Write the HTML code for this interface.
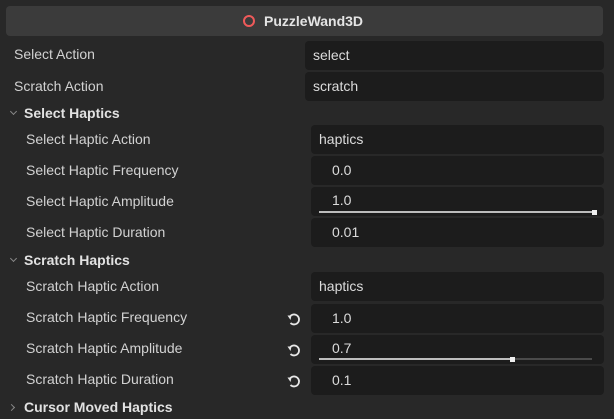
<!DOCTYPE html><html><head><style>
body{margin:0;width:614px;height:419px;background:#282828;font-family:"Liberation Sans",sans-serif;font-size:14px;color:#d2d2d2;position:relative;overflow:hidden}
.a{position:absolute}
.f{position:absolute;background:#1c1c1c;border-radius:4px;height:29px;line-height:29px;box-sizing:border-box;color:#dcdcdc}
.l{position:absolute;line-height:20px}
.h{position:absolute;font-weight:bold;line-height:20px;color:#e2e2e2}
.c{position:absolute;width:4px;height:4px;border-right:1.2px solid #888;border-bottom:1.2px solid #888}
.tr{position:absolute;height:2px;background:#4a4a4a}
.tf{position:absolute;height:2px;background:#bdbdbd}
.k{position:absolute;width:5px;height:5px;background:#eee}
</style></head><body>
<div class="a" style="left:6px;top:6px;width:597px;height:30px;background:#3b3b3b;border-radius:4px"></div>
<div class="a" style="left:243px;top:15px;width:8px;height:8px;border:2px solid #ef5a5a;border-radius:50%"></div>
<div class="a" style="left:264px;top:11px;line-height:20px;font-weight:bold;color:#e4e4e4">PuzzleWand3D</div>

<div class="l" style="left:14px;top:44px">Select Action</div>
<div class="f" style="left:305px;top:41px;width:299px;padding-left:8px">select</div>
<div class="l" style="left:14px;top:76px">Scratch Action</div>
<div class="f" style="left:305px;top:72px;width:299px;padding-left:8px">scratch</div>

<div class="c" style="left:11px;top:109px;transform:rotate(45deg)"></div>
<div class="h" style="left:24px;top:103px">Select Haptics</div>
<div class="l" style="left:26px;top:129px">Select Haptic Action</div>
<div class="f" style="left:311px;top:125px;width:293px;padding-left:8px">haptics</div>
<div class="l" style="left:26px;top:160px">Select Haptic Frequency</div>
<div class="f" style="left:311px;top:156px;width:293px;padding-left:21px">0.0</div>
<div class="l" style="left:26px;top:191px">Select Haptic Amplitude</div>
<div class="f" style="left:311px;top:187px;width:293px;padding-left:21px;line-height:27px">1.0</div>
<div class="tf" style="left:319px;top:211px;width:275px"></div><div class="k" style="left:592px;top:210px"></div>
<div class="l" style="left:26px;top:222px">Select Haptic Duration</div>
<div class="f" style="left:311px;top:218px;width:293px;padding-left:21px">0.01</div>

<div class="c" style="left:11px;top:256px;transform:rotate(45deg)"></div>
<div class="h" style="left:24px;top:250px">Scratch Haptics</div>
<div class="l" style="left:26px;top:276px">Scratch Haptic Action</div>
<div class="f" style="left:311px;top:272px;width:293px;padding-left:8px">haptics</div>
<div class="l" style="left:26px;top:307px">Scratch Haptic Frequency</div>
<div class="f" style="left:311px;top:304px;width:293px;padding-left:21px">1.0</div>
<div class="l" style="left:26px;top:338px">Scratch Haptic Amplitude</div>
<div class="f" style="left:311px;top:335px;width:293px;padding-left:21px;line-height:27px">0.7</div>
<div class="tf" style="left:319px;top:358px;width:193px"></div><div class="tr" style="left:512px;top:358px;width:80px"></div><div class="k" style="left:510px;top:357px"></div>
<div class="l" style="left:26px;top:369px">Scratch Haptic Duration</div>
<div class="f" style="left:311px;top:366px;width:293px;padding-left:21px">0.1</div>

<svg class="a" style="left:287px;top:312px" width="14" height="14" viewBox="0 0 14 14"><path d="M3 4.5A5 5 0 1 1 3.5 11" fill="none" stroke="#e8e8e8" stroke-width="1.8"/><path d="M0.5 3.5L4.5 3.5L3.5 8Z" fill="#e8e8e8"/></svg>
<svg class="a" style="left:287px;top:343px" width="14" height="14" viewBox="0 0 14 14"><path d="M3 4.5A5 5 0 1 1 3.5 11" fill="none" stroke="#e8e8e8" stroke-width="1.8"/><path d="M0.5 3.5L4.5 3.5L3.5 8Z" fill="#e8e8e8"/></svg>
<svg class="a" style="left:287px;top:374px" width="14" height="14" viewBox="0 0 14 14"><path d="M3 4.5A5 5 0 1 1 3.5 11" fill="none" stroke="#e8e8e8" stroke-width="1.8"/><path d="M0.5 3.5L4.5 3.5L3.5 8Z" fill="#e8e8e8"/></svg>

<div class="c" style="left:9px;top:405px;transform:rotate(-45deg)"></div>
<div class="h" style="left:24px;top:397px">Cursor Moved Haptics</div>
</body></html>
